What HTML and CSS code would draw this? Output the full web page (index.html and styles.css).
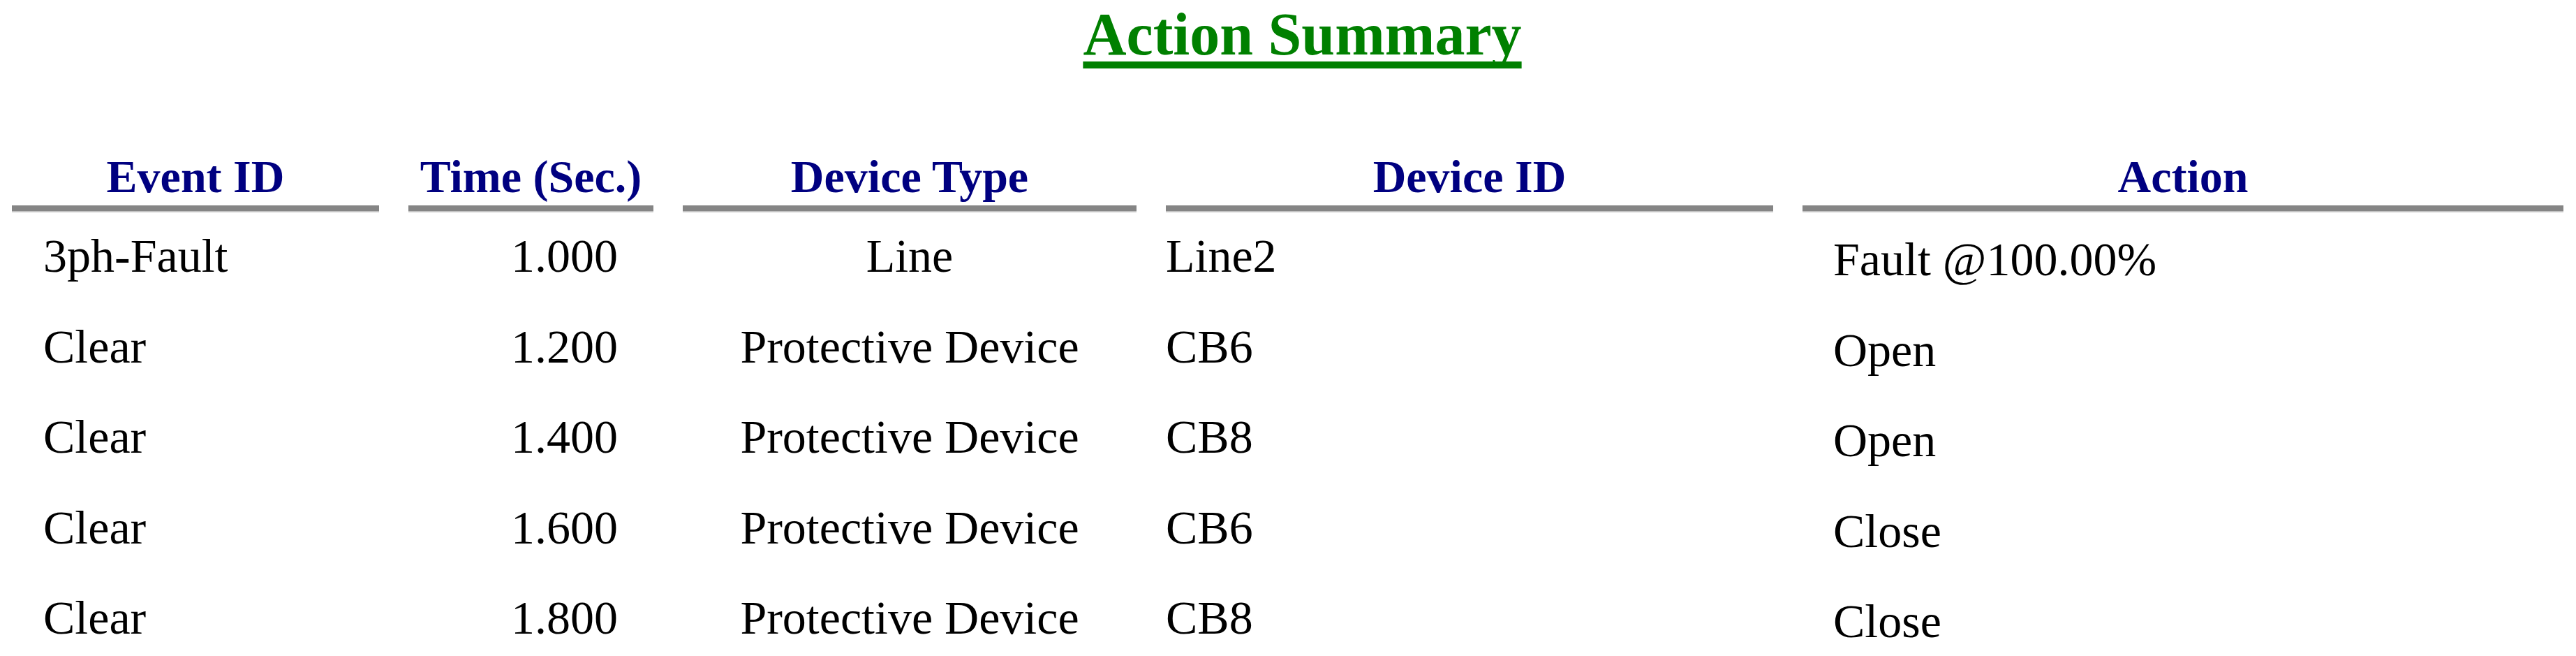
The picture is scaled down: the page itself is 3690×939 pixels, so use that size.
FILE: index.html
```html
<!DOCTYPE html>
<html lang="en">
<head>
<meta charset="utf-8">
<title>Action Summary</title>
<link rel="stylesheet" href="styles.css">
</head>
<body>
<h1 class="title"><span class="title-text">Action Summary</span></h1>
<div class="summary">
  <div class="hd">Event ID</div>
  <div class="hd">Time (Sec.)</div>
  <div class="hd">Device Type</div>
  <div class="hd">Device ID</div>
  <div class="hd">Action</div>

  <div class="cell event">3ph-Fault</div>
  <div class="cell time">1.000</div>
  <div class="cell type">Line</div>
  <div class="cell devid">Line2</div>
  <div class="cell action">Fault @100.00%</div>

  <div class="cell event">Clear</div>
  <div class="cell time">1.200</div>
  <div class="cell type">Protective Device</div>
  <div class="cell devid">CB6</div>
  <div class="cell action">Open</div>

  <div class="cell event">Clear</div>
  <div class="cell time">1.400</div>
  <div class="cell type">Protective Device</div>
  <div class="cell devid">CB8</div>
  <div class="cell action">Open</div>

  <div class="cell event">Clear</div>
  <div class="cell time">1.600</div>
  <div class="cell type">Protective Device</div>
  <div class="cell devid">CB6</div>
  <div class="cell action">Close</div>

  <div class="cell event">Clear</div>
  <div class="cell time">1.800</div>
  <div class="cell type">Protective Device</div>
  <div class="cell devid">CB8</div>
  <div class="cell action">Close</div>
</div>
</body>
</html>
```
FILE: styles.css
```css
html, body {
  margin: 0;
  padding: 0;
  background: #ffffff;
}
body {
  font-family: "Liberation Serif", "Times New Roman", serif;
  color: #000000;
  padding: 0 18px 0 17px;
  overflow: hidden;
}
.title {
  margin: 0 0 117px 0;
  padding-left: 42px;
  text-align: center;
  font-size: 86px;
  line-height: 98px;
  font-weight: bold;
  color: #008000;
}
.title-text {
  text-decoration: underline;
  text-decoration-thickness: 10px;
  text-underline-offset: 10px;
  text-decoration-skip-ink: none;
}
.summary {
  display: grid;
  grid-template-columns: 526px 351px 650px 870px 1090px;
  column-gap: 42px;
}
.hd {
  font-size: 66px;
  line-height: 76px;
  font-weight: bold;
  color: #000080;
  text-align: center;
  padding-bottom: 3px;
  border-bottom: 8px solid #858585;
  box-shadow: 0 2px 0 #c4c4c4;
  white-space: nowrap;
}
.cell {
  font-size: 68px;
  line-height: 129.5px;
  white-space: nowrap;
}
.event {
  padding-left: 45px;
}
.time {
  text-align: right;
  padding-right: 51px;
}
.type {
  text-align: center;
}
.devid {
  padding-left: 0;
}
.action {
  padding-left: 44px;
  padding-top: 9px;
  line-height: 120.5px;
}
```
